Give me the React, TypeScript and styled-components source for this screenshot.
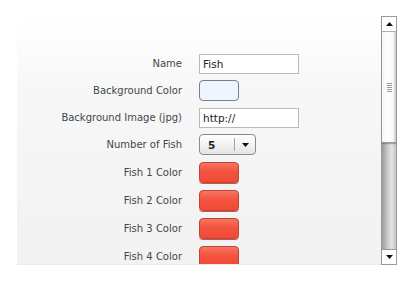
import React from "react";
import styled, { createGlobalStyle } from "styled-components";

const Global = createGlobalStyle`
  html, body { margin: 0; padding: 0; background: #ffffff; }
  body { font-family: "DejaVu Sans", Verdana, sans-serif; }
`;

const Page = styled.div`
  padding: 16px 0 0 17px;
  display: flex;
`;

const Frame = styled.div`
  display: flex;
  height: 249px;
`;

const Panel = styled.div`
  width: 364px;
  height: 249px;
  overflow: hidden;
  background: linear-gradient(to bottom, #ffffff 0%, #f7f7f7 30%, #f2f2f2 100%);
  border-bottom: 1px solid #ececec;
  box-sizing: border-box;
`;

const Form = styled.div`
  display: grid;
  grid-template-columns: 165px auto;
  column-gap: 17px;
  row-gap: 6px;
  padding-top: 38px;
  align-items: start;
`;

const Label = styled.div<{ $h: number }>`
  text-align: right;
  font-size: 10px;
  color: #3d4850;
  height: ${(p) => p.$h}px;
  line-height: ${(p) => p.$h}px;
  white-space: nowrap;
`;

const Field = styled.div<{ $h: number }>`
  display: flex;
  align-items: flex-start;
  height: ${(p) => p.$h}px;
`;

const TextInput = styled.div`
  width: 100px;
  height: 20px;
  box-sizing: border-box;
  border: 1px solid #b9b9b9;
  background: #fff;
  font-size: 10.5px;
  color: #222;
  padding-left: 3px;
  line-height: 18px;
`;

const Swatch = styled.div<{ $color: "blue" | "red" }>`
  width: 40px;
  height: 21px;
  box-sizing: border-box;
  border-radius: 4px;
  border: 1px solid ${(p) => (p.$color === "red" ? "#b8473a" : "#7a7f86")};
  background: ${(p) =>
    p.$color === "red"
      ? "linear-gradient(to bottom, #f87562 0%, #f3533f 45%, #ef4a36 100%)"
      : "#eef5ff"};
  box-shadow: ${(p) => (p.$color === "red" ? "0 1px 0 #c7584a" : "none")};
`;

const Select = styled.div`
  width: 57px;
  height: 21px;
  box-sizing: border-box;
  border: 1px solid #8a8a8a;
  border-radius: 4px;
  background: linear-gradient(to bottom, #ffffff 0%, #f3f3f3 50%, #e4e4e4 100%);
  display: flex;
  align-items: center;
  font-size: 10.5px;
  font-weight: bold;
  color: #222;
`;

const SelectValue = styled.div`
  flex: 1;
  padding-left: 8px;
`;

const SelectSep = styled.div`
  width: 1px;
  height: 13px;
  background: #a6a6a6;
`;

const SelectArrow = styled.div`
  width: 20px;
  display: flex;
  justify-content: center;
  align-items: center;
`;

const ScrollBar = styled.div`
  width: 16px;
  height: 249px;
  box-sizing: border-box;
  border: 1px solid #9a9a9a;
  display: flex;
  flex-direction: column;
  background: linear-gradient(to right, #9c9c9c 0%, #c9c9c9 40%, #e3e3e3 70%, #c2c2c2 100%);
`;

const ScrollButton = styled.div`
  height: 15px;
  background: #ffffff;
  display: flex;
  align-items: center;
  justify-content: center;
  box-sizing: border-box;
`;

const UpButton = styled(ScrollButton)`
  border-bottom: 1px solid #b0b0b0;
`;

const DownButton = styled(ScrollButton)`
  border-top: 1px solid #9a9a9a;
  margin-top: auto;
`;

const Thumb = styled.div`
  height: 111px;
  box-sizing: border-box;
  background: linear-gradient(to right, #f6f6f6 0%, #ffffff 50%, #eeeeee 100%);
  border-bottom: 1px solid #9a9a9a;
  box-shadow: inset -2px 0 0 #d8d8d8, 0 1px 1px rgba(0, 0, 0, 0.25);
  display: flex;
  align-items: center;
  justify-content: center;
`;

const Grip = styled.div`
  display: flex;
  flex-direction: column;
  gap: 1px;
`;

const GripLine = styled.div`
  width: 5px;
  height: 1px;
  background: #9a9a9a;
`;

const Tri = ({ up }: { up?: boolean }) => (
  <svg width="7" height="4" viewBox="0 0 7 4">
    <path d={up ? "M0 4 L3.5 0 L7 4 Z" : "M0 0 L7 0 L3.5 4 Z"} fill="#111" />
  </svg>
);

export default function App() {
  const fish = [1, 2, 3, 4];
  return (
    <>
      <Global />
      <Page>
        <Frame>
          <Panel>
            <Form>
              <Label $h={20}>Name</Label>
              <Field $h={20}>
                <TextInput>Fish</TextInput>
              </Field>
              <Label $h={21}>Background Color</Label>
              <Field $h={22}>
                <Swatch $color="blue" />
              </Field>
              <Label $h={20}>Background Image (jpg)</Label>
              <Field $h={20}>
                <TextInput>http://</TextInput>
              </Field>
              <Label $h={21}>Number of Fish</Label>
              <Field $h={22}>
                <Select>
                  <SelectValue>5</SelectValue>
                  <SelectSep />
                  <SelectArrow>
                    <Tri />
                  </SelectArrow>
                </Select>
              </Field>
              {fish.map((n) => (
                <React.Fragment key={n}>
                  <Label $h={21}>Fish {n} Color</Label>
                  <Field $h={22}>
                    <Swatch $color="red" />
                  </Field>
                </React.Fragment>
              ))}
            </Form>
          </Panel>
          <ScrollBar>
            <UpButton>
              <Tri up />
            </UpButton>
            <Thumb>
              <Grip>
                <GripLine />
                <GripLine />
                <GripLine />
                <GripLine />
                <GripLine />
              </Grip>
            </Thumb>
            <DownButton>
              <Tri />
            </DownButton>
          </ScrollBar>
        </Frame>
      </Page>
    </>
  );
}
